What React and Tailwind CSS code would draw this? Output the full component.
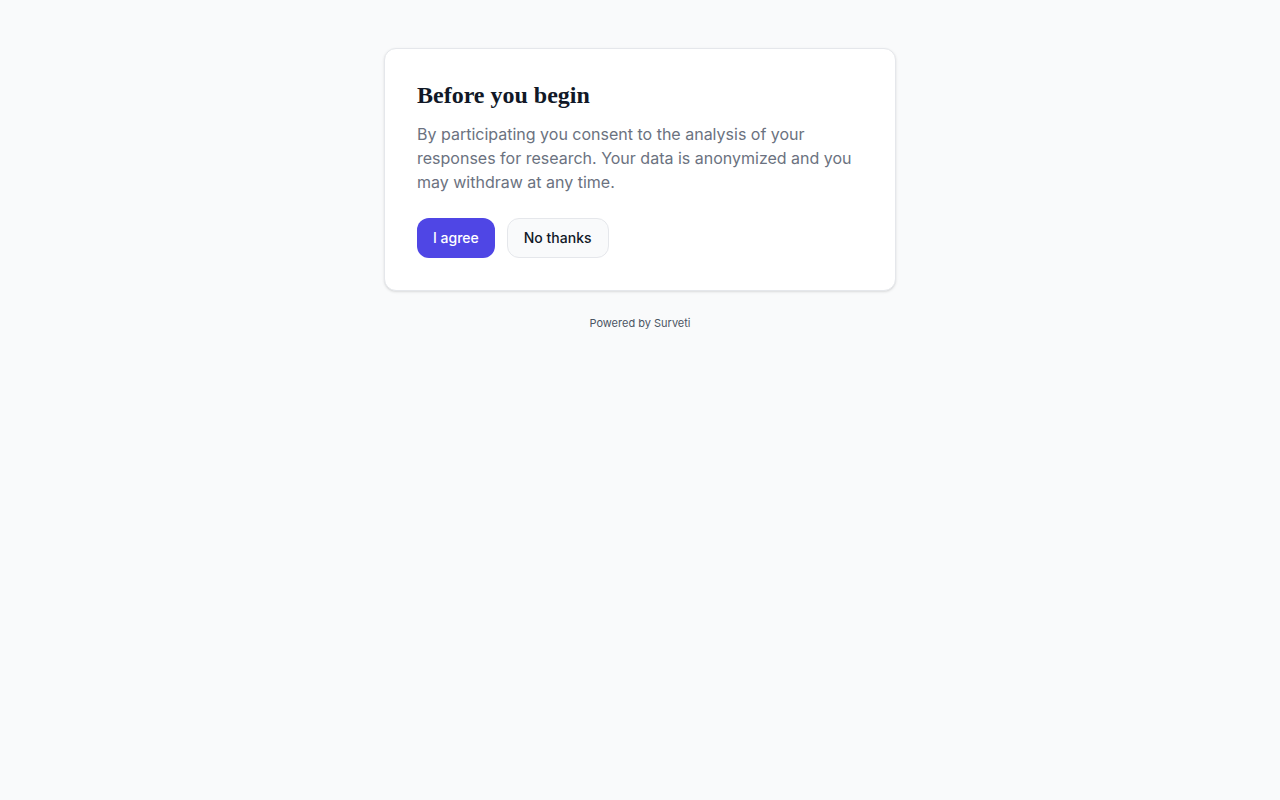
export default function App() {
  return (
    <div className="min-h-screen w-full bg-[#f9fafb] py-12" style={{ fontFamily: "Inter, 'Noto Sans', sans-serif" }}>
      <div className="mx-auto w-[512px] rounded-xl border border-[#e5e7eb] bg-white p-8 shadow-sm">
        <h1 className="text-[24px] font-bold leading-[29px] text-[#111827]" style={{ fontFamily: "'Liberation Serif', 'DejaVu Serif', serif" }}>
          Before you begin
        </h1>
        <p className="mt-3 text-base leading-6 text-[#6b7280]">
          By participating you consent to the analysis of your responses for research. Your data is anonymized and you may withdraw at any time.
        </p>
        <div className="mt-6 flex gap-3">
          <button className="h-10 rounded-xl bg-[#4f46e5] px-4 text-sm font-medium text-white">I agree</button>
          <button className="h-10 rounded-xl border border-[#e5e7eb] bg-[#f9fafb] px-4 text-sm font-medium text-[#111827]">No thanks</button>
        </div>
      </div>
      <p className="mt-6 text-center text-[11px] leading-4 text-[#4b5563]">Powered by Surveti</p>
    </div>
  );
}
